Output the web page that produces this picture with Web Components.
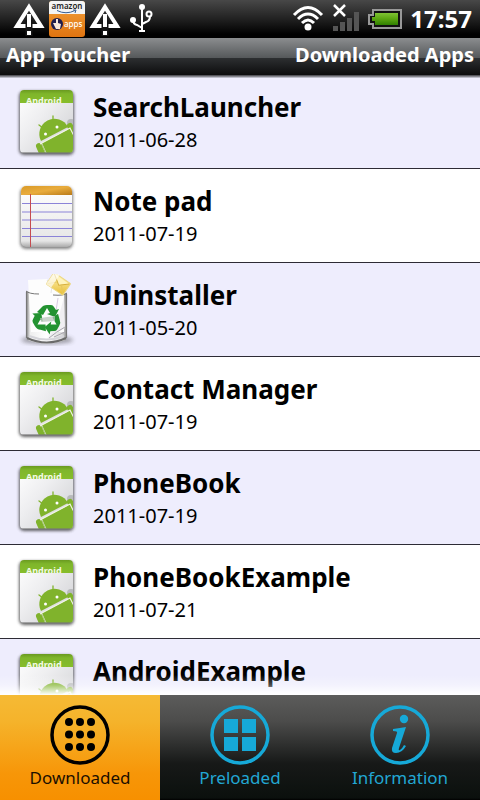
<!DOCTYPE html>
<html lang="en">
<head>
<meta charset="utf-8">
<meta name="viewport" content="width=device-width, initial-scale=1">
<title>App Toucher</title>
<style>
  body {
    margin: 0;
    background: #000;
    font-family: "Noto Sans", "Open Sans", sans-serif;
  }
</style>
</head>
<body>
<app-toucher></app-toucher>

<script>
const icons = {
  android: `
    <svg viewBox="0 0 72 72" width="72" height="72" aria-hidden="true">
      <defs>
        <linearGradient id="card" x1="0" y1="0" x2="1" y2="1"><stop offset="0" stop-color="#fff"/><stop offset=".4" stop-color="#eeeef0"/><stop offset="1" stop-color="#cccdd0"/></linearGradient>
        <linearGradient id="top" x1="0" y1="0" x2="0" y2="1"><stop offset="0" stop-color="#6a9a20"/><stop offset=".3" stop-color="#7fb62b"/><stop offset="1" stop-color="#86bd2b"/></linearGradient>
        <clipPath id="shape"><rect x="9" y="4" width="53" height="63" rx="4"/></clipPath>
        <clipPath id="band"><rect x="9" y="4" width="53" height="13"/></clipPath>
        <filter id="soft" x="-20%" y="-20%" width="140%" height="140%"><feGaussianBlur stdDeviation="1.6"/></filter>
      </defs>
      <rect x="8" y="5" width="55" height="64" rx="5" fill="#333" opacity=".75" filter="url(#soft)"/>
      <g clip-path="url(#shape)">
        <rect x="9" y="4" width="53" height="64" fill="url(#card)"/>
        <rect x="9" y="4" width="53" height="13" fill="url(#top)"/>
        <circle cx="60" cy="37" r="4" fill="#b8babc"/>
        <path d="M30 55A15 15 0 0 1 57 41Z" fill="#80b32c"/>
        <path d="M32 42l-4-3M42 36v-6" stroke="#80b32c" stroke-width="1.3" stroke-linecap="round"/>
        <circle cx="34.5" cy="48" r="1.5" fill="#fff"/><circle cx="46" cy="41" r="1.5" fill="#fff"/>
        <path d="M31 57L62 41V68H36Z" fill="#80b32c"/>
        <path d="M28 60L34 74" stroke="#80b32c" stroke-width="6" stroke-linecap="round"/>
        <path d="M59 40L64 50" stroke="#80b32c" stroke-width="6" stroke-linecap="round"/>
        <path d="M29 58L59 42L63 50" fill="none" stroke="#f0f4e4" stroke-width="1.2"/>
        <path d="M31 59L35 68" stroke="#a5c96c" stroke-width="1"/>
        <path d="M9 66.5H62" stroke="#777" opacity=".6"/>
      </g>
      <text x="15" y="18" clip-path="url(#band)" font-family="Noto Sans, sans-serif" font-size="9" font-weight="700" fill="#f4fae6">Android</text>
    </svg>`,
  notepad: `
    <svg viewBox="0 0 72 72" width="72" height="72" aria-hidden="true">
      <defs>
        <linearGradient id="leather" x1="0" y1="0" x2="1" y2="1"><stop offset="0" stop-color="#d99a28"/><stop offset=".5" stop-color="#e9ac3d"/><stop offset="1" stop-color="#b97a19"/></linearGradient>
        <linearGradient id="sheet" x1="0" y1="0" x2="0" y2="1"><stop offset="0" stop-color="#fff"/><stop offset=".9" stop-color="#e6e6e6"/><stop offset="1" stop-color="#aaa"/></linearGradient>
        <clipPath id="shape"><rect x="10" y="6" width="51" height="61" rx="5"/></clipPath>
        <filter id="soft" x="-20%" y="-20%" width="140%" height="140%"><feGaussianBlur stdDeviation="1.5"/></filter>
      </defs>
      <rect x="9" y="7" width="53" height="62" rx="6" fill="#333" opacity=".6" filter="url(#soft)"/>
      <g clip-path="url(#shape)">
        <rect x="10" y="6" width="51" height="61" fill="url(#sheet)"/>
        <rect x="10" y="6" width="51" height="9" fill="url(#leather)"/>
        <path d="M11 23.5H61M11 32H61M11 40H61M11 48.5H61M11 56.5H61" stroke="#8b83d8"/>
        <path d="M19.5 14V67" stroke="#c54b50"/>
      </g>
    </svg>`,
  trash: `
    <svg viewBox="0 0 72 72" width="72" height="72" aria-hidden="true">
      <defs>
        <linearGradient id="glass" x1="0" y1="0" x2="1" y2="0"><stop offset="0" stop-color="#777"/><stop offset=".1" stop-color="#eee"/><stop offset=".5" stop-color="#fff"/><stop offset=".88" stop-color="#ddd"/><stop offset="1" stop-color="#888"/></linearGradient>
        <linearGradient id="mail" x1="0" y1="0" x2="1" y2="1"><stop offset="0" stop-color="#fff7c8"/><stop offset="1" stop-color="#e9bd2f"/></linearGradient>
        <filter id="soft" x="-20%" y="-80%" width="140%" height="260%"><feGaussianBlur stdDeviation="2"/></filter>
        <path id="arrow" d="M-6-11Q-4-14 0-14H4Q6-14 7-12L9-9L12-10L8-2L0-5L3-6L0-11L-4-4L-10-7Z"/>
      </defs>
      <ellipse cx="36" cy="66" rx="26" ry="4" fill="#333" opacity=".45" filter="url(#soft)"/>
      <path d="M15 17Q36 22 56 19L55 66Q36 73 16 66Z" fill="url(#glass)"/>
      <path d="M17 6L36 5L41 11L53 19V58H20Z" fill="#fdfdfd"/>
      <path d="M36 6L41 12L40 19" fill="none" stroke="#e4e4e4"/>
      <path d="M53 23L45 53L37 64L54 54Z" fill="#f0eff2"/>
      <path d="M38 64Q45 58 54 53M43 63L54 58" fill="none" stroke="#a9a6af"/>
      <path d="M47 24L45 37" stroke="#d9cbe2"/>
      <path d="M15.5 18V64M55.5 20V64" stroke="#777" stroke-width="1.2"/>
      <path d="M15 17Q18 20 28 20M42 21Q53 22 56 19" fill="none" stroke="#777"/>
      <path d="M16 64Q36 73 55 64" fill="none" stroke="#6a6a6a" stroke-width="2"/>
      <path d="M18 62Q36 69 53 62" fill="none" stroke="#d5d5da" stroke-width="2"/>
      <g transform="translate(36 45)" fill="#239331">
        <use href="#arrow"/><use href="#arrow" transform="rotate(120)"/><use href="#arrow" transform="rotate(240)"/>
      </g>
      <path d="M29 44L44 42V47L30 48Z" fill="#b8c5bb" opacity=".75"/>
      <g transform="rotate(34 48 9)">
        <rect x="38" y="3" width="20" height="14" rx="1" fill="url(#mail)" stroke="#ecd780"/>
        <path d="M39 4L49 11L57 4" fill="#fff4bd" stroke="#d6ae3c"/>
        <path d="M39 16L46 9M57 16L51 9" stroke="#e5c75e"/>
        <rect x="38" y="2" width="6" height="15" fill="#fff" opacity=".65"/>
      </g>
    </svg>`,
  downloaded: `
    <svg viewBox="0 0 60 60" width="60" height="60" fill="currentColor" aria-hidden="true">
      <circle cx="30" cy="30" r="28" fill="none" stroke="currentColor" stroke-width="3.5"/>
      <circle cx="19" cy="17" r="4"/><circle cx="30" cy="17" r="4"/><circle cx="41" cy="17" r="4"/>
      <circle cx="19" cy="29.5" r="4"/><circle cx="30" cy="29.5" r="4"/><circle cx="41" cy="29.5" r="4"/>
      <circle cx="19" cy="42" r="4"/><circle cx="30" cy="42" r="4"/><circle cx="41" cy="42" r="4"/>
    </svg>`,
  preloaded: `
    <svg viewBox="0 0 60 60" width="60" height="60" fill="currentColor" aria-hidden="true">
      <circle cx="30" cy="30" r="28" fill="none" stroke="currentColor" stroke-width="3.5"/>
      <path d="M14 14H28V28H14ZM32 14H46V28H32ZM14 32H28V46H14ZM32 32H46V46H32Z"/>
    </svg>`,
  information: `
    <svg viewBox="0 0 60 60" width="60" height="60" fill="currentColor" aria-hidden="true">
      <circle cx="30" cy="30" r="28" fill="none" stroke="currentColor" stroke-width="3.5"/>
      <circle cx="34" cy="14" r="4.2"/>
      <path d="M23 24Q30 23 36 22L29 43Q28 46 30 45Q32 44 34 40L36 41Q32 48 26 48Q21 48 22 43L27 28Q28 26 23 26Z"/>
    </svg>`
};

class StatusBar extends HTMLElement {
  constructor() {
    super();
    this.attachShadow({ mode: 'open' });
    const warning = `
      <svg viewBox="0 0 32 34" width="32" height="34" aria-hidden="true">
        <path d="M16 5L28 24H4Z" fill="none" stroke="#fff" stroke-width="4"/>
        <path d="M12.5 18H19.5V34H12.5Z" fill="#151515"/>
        <path d="M14 12H18V25H14ZM14 29H18V33H14Z" fill="#fff"/>
      </svg>`;
    this.shadowRoot.innerHTML = `
      <style>
      :host {
        display: flex;
        align-items: center;
        justify-content: space-between;
        height: 38px;
        padding: 0 8px 0 13px;
        color: #fff;
        background: linear-gradient(#484848, #1d1d1d 55%, #000 90%);
      }

      .group {
        display: flex;
        align-items: center;
        gap: 8px;
      }

      .alerts {
        gap: 4px;
      }

      svg {
        display: block;
      }

      time {
        font-size: 24px;
        font-weight: 700;
        line-height: 38px;
      }
      </style>

      <div class="group alerts">
        ${warning}
        <svg viewBox="0 0 36 36" width="36" height="36" aria-hidden="true">
          <defs><linearGradient id="box" x1="0" y1="0" x2="0" y2="1"><stop offset="0" stop-color="#f3a13a"/><stop offset="1" stop-color="#df7411"/></linearGradient></defs>
          <rect width="36" height="36" rx="3" fill="url(#box)"/>
          <path d="M3 0H33Q36 0 36 3V13H0V3Q0 0 3 0Z" fill="#f4f4f4"/>
          <text x="18" y="8" text-anchor="middle" font-family="Noto Sans, sans-serif" font-size="8" font-weight="600" fill="#222">amazon</text>
          <path d="M8 9.5Q17 14 26 9.5M24 9H27L26 12" fill="none" stroke="#365d8f"/>
          <circle cx="8" cy="23" r="6" fill="#201d4c"/>
          <path d="M7 18V22L4 22L7 28H11L12 23L9 22V18Z" fill="#f8e7da"/>
          <text x="15" y="26" font-family="Noto Sans, sans-serif" font-size="8" font-weight="500" fill="#fff">apps</text>
        </svg>
        ${warning}
        <svg viewBox="0 0 32 34" width="32" height="34" fill="#fff" aria-hidden="true">
          <g fill="none" stroke="#fff" stroke-width="2">
            <path d="M17 5V29M8 18Q8 22 12 23L17 26M25 14Q25 19 21 20L17 22"/>
            <circle cx="24" cy="12" r="2.5"/>
          </g>
          <circle cx="17" cy="5" r="3"/><circle cx="8" cy="18" r="3"/>
          <path d="M14 28H20V30H14Z"/>
        </svg>
      </div>
      <div class="group">
        <svg viewBox="0 0 32 28" width="32" height="28" fill="none" stroke="#fff" stroke-width="3" aria-hidden="true">
          <path d="M2 10Q16-5 30 10M6 14Q16 4 26 14M10 18Q16 12 22 18"/>
          <circle cx="16" cy="22" r="3.5" fill="#fff" stroke="none"/>
        </svg>
        <svg viewBox="0 0 28 30" width="28" height="30" aria-hidden="true">
          <path d="M1 22H6V27H1ZM8 18H13V27H8ZM15 14H20V27H15ZM22 8H27V27H22Z" fill="#555"/>
          <path d="M2 1L13 12M13 1L2 12" stroke="#fff" stroke-width="2.5"/>
        </svg>
        <svg viewBox="0 0 34 20" width="34" height="20" aria-hidden="true">
          <defs><linearGradient id="charge" x1="0" y1="0" x2="0" y2="1"><stop offset="0" stop-color="#7fc333"/><stop offset=".5" stop-color="#5aa510"/><stop offset="1" stop-color="#2f7f00"/></linearGradient></defs>
          <path d="M5 1H33V19H5V15H1V6H5Z" fill="#111" stroke="#999" stroke-width="2"/>
          <path d="M7 4H30V16H7V12H4V8H7Z" fill="url(#charge)"/>
        </svg>
        <time>17:57</time>
      </div>
    `;
  }
}

class TitleBar extends HTMLElement {
  constructor() {
    super();
    this.attachShadow({ mode: 'open' });
    this.shadowRoot.innerHTML = `
      <style>
      :host {
        position: relative;
        z-index: 1;
        display: flex;
        justify-content: space-between;
        height: 37px;
        padding: 0 6px;
        color: #fff;
        font-size: 20px;
        font-weight: 700;
        line-height: 34px;
        white-space: nowrap;
        background: linear-gradient(#8b8d8f, #55585a 20px, #2d2f31 20px, #0c0c0d);
        box-shadow: 0 1px #55555b, 0 2px #85858d, 0 3px #bcbcc8;
      }
      </style>

      <slot></slot>
    `;
  }
}

class AppRow extends HTMLElement {
  connectedCallback() {
    if (this.shadowRoot) return;
    this.attachShadow({ mode: 'open' });
    this.shadowRoot.innerHTML = `
      <style>
      :host {
        display: flex;
        flex: none;
        align-items: center;
        gap: 10px;
        height: 93px;
        padding: 0 11px;
        border-bottom: 1px solid #2d2b35;
        background: #fff;
        color: #000;
      }

      :host(:nth-child(odd)) {
        background: #eeedfd;
      }

      svg {
        display: block;
        flex: none;
      }

      .label {
        padding-top: 2px;
      }

      .name {
        margin: 0;
        font-size: 26px;
        font-weight: 700;
        line-height: 34px;
      }

      .date {
        display: block;
        min-height: 32px;
        font-size: 20px;
        line-height: 32px;
      }
      </style>

      ${icons[this.getAttribute('icon')]}
      <div class="label">
        <h2 class="name"><slot></slot></h2>
        <time class="date">${this.getAttribute('date') || ''}</time>
      </div>
    `;
  }
}

class TabButton extends HTMLElement {
  connectedCallback() {
    if (this.shadowRoot) return;
    this.attachShadow({ mode: 'open' });
    this.shadowRoot.innerHTML = `
      <style>
      :host {
        display: block;
      }

      button {
        display: flex;
        flex-direction: column;
        align-items: center;
        width: 100%;
        height: 105px;
        padding: 10px 0 0;
        border: 0;
        color: #22a7d3;
        font-family: inherit;
        font-size: 17px;
        line-height: 26px;
        background: linear-gradient(#5c5c5b, #4c4c4b 25%, #171918 65%, #0b100d 98%, #000);
      }

      :host([selected]) button {
        color: #1c0f00;
        background: linear-gradient(#f5ba35, #f5b32b 25%, #f79608 75%, #f79000);
      }

      svg {
        display: block;
        color: #16a9d8;
      }

      :host([selected]) svg {
        color: #000;
      }
      </style>

      <button type="button">
        ${icons[this.getAttribute('icon')]}
        <slot></slot>
      </button>
    `;
  }
}

class AppToucher extends HTMLElement {
  constructor() {
    super();
    this.attachShadow({ mode: 'open' });
    this.shadowRoot.innerHTML = `
      <style>
      :host {
        display: flex;
        flex-direction: column;
        height: 100vh;
      }

      main {
        position: relative;
        display: flex;
        flex: 1;
        flex-direction: column;
        min-height: 0;
        overflow: hidden;
        background: #fff;
      }

      /* the last visible row fades out above the tabs */
      main::after {
        content: '';
        position: absolute;
        right: 0;
        bottom: 0;
        left: 0;
        height: 20px;
        background: linear-gradient(rgba(255, 255, 255, 0), rgba(255, 255, 255, .3) 50%, #fff);
      }

      nav {
        display: grid;
        grid-template-columns: repeat(3, 1fr);
      }
      </style>

      <status-bar></status-bar>
      <title-bar><span>App Toucher</span><span>Downloaded Apps</span></title-bar>
      <main>
        <app-row icon="android" date="2011-06-28">SearchLauncher</app-row>
        <app-row icon="notepad" date="2011-07-19">Note pad</app-row>
        <app-row icon="trash" date="2011-05-20">Uninstaller</app-row>
        <app-row icon="android" date="2011-07-19">Contact Manager</app-row>
        <app-row icon="android" date="2011-07-19">PhoneBook</app-row>
        <app-row icon="android" date="2011-07-21">PhoneBookExample</app-row>
        <app-row icon="android">AndroidExample</app-row>
      </main>
      <nav>
        <tab-button icon="downloaded" selected>Downloaded</tab-button>
        <tab-button icon="preloaded">Preloaded</tab-button>
        <tab-button icon="information">Information</tab-button>
      </nav>
    `;
  }
}

customElements.define('status-bar', StatusBar);
customElements.define('title-bar', TitleBar);
customElements.define('app-row', AppRow);
customElements.define('tab-button', TabButton);
customElements.define('app-toucher', AppToucher);
</script>
</body>
</html>
